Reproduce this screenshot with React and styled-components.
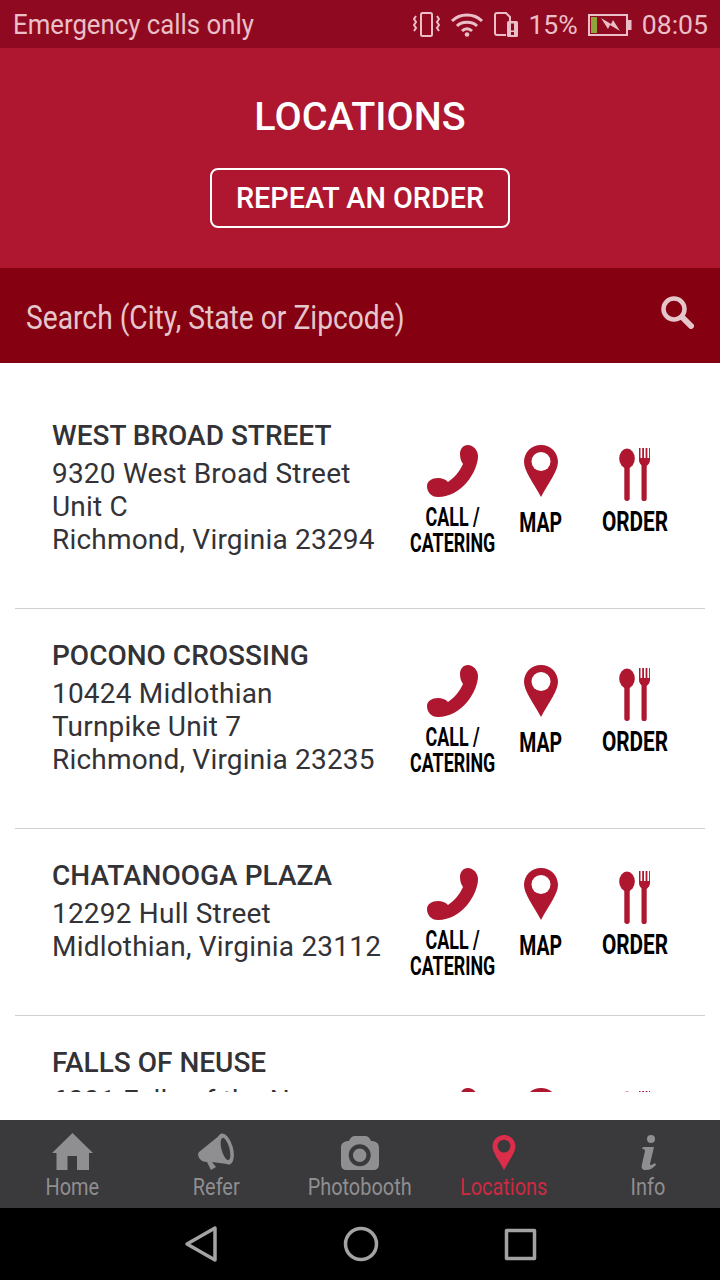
import React from 'react';
import styled, { createGlobalStyle } from 'styled-components';

const GlobalStyle = createGlobalStyle`
    html, body { margin: 0; padding: 0; background: #fff; }
    body { font-family: Roboto, "Liberation Sans", sans-serif; }
`;

const Screen = styled.div`
    width: 720px;
    height: 1280px;
    display: flex;
    flex-direction: column;
    overflow: hidden;
`;

// android status bar
const StatusBar = styled.div`
    height: 48px;
    flex: none;
    box-sizing: border-box;
    display: flex;
    align-items: center;
    padding: 1px 12px 0 13px;
    background: #8f0a21;
    color: #eabfc7;
    font-size: 28px;
`;

const Squeezed = styled.span`
    display: inline-block;
    white-space: nowrap;
    transform-origin: left center;
    transform: scaleX(${p => p.$x});
`;

const Spacer = styled.div`
    flex-grow: 1;
`;

const StatusIcons = styled.div`
    display: flex;
    align-items: center;
    gap: 10px;
    font-size: 26.600px;
`;

const Header = styled.div`
    height: 220px;
    flex: none;
    box-sizing: border-box;
    padding-top: 47px;
    display: flex;
    flex-direction: column;
    align-items: center;
    background: #ae172f;
    color: #fff;
`;

const Title = styled.div`
    font-size: 39.500px;
    font-weight: 500;
    line-height: 44px;
`;

const RepeatButton = styled.div`
    margin-top: 29px;
    width: 300px;
    height: 60px;
    box-sizing: border-box;
    border: 2px solid #fff;
    border-radius: 8px;
    display: flex;
    align-items: center;
    justify-content: center;
    font-size: 28.800px;
    font-weight: 500;
`;

const SearchBar = styled.div`
    height: 95px;
    flex: none;
    box-sizing: border-box;
    padding: 0 26px;
    display: flex;
    align-items: center;
    background: #850011;
    color: #e4c6cb;
    font-size: 33px;
`;

const SearchText = styled(Squeezed)`
    padding-top: 4px;
`;

const SearchIcon = styled.svg`
    margin-bottom: 8px;
`;

const Content = styled.div`
    height: 757px;
    flex: none;
    box-sizing: border-box;
    padding-bottom: 28px;
    background: #fff;
`;

const List = styled.div`
    height: 100%;
    overflow: hidden;
    padding: 26px 15px 0;
    box-sizing: border-box;
`;

const Row = styled.div`
    display: flex;
    align-items: center;
    justify-content: space-between;
    box-sizing: border-box;
    min-height: ${p => p.$minHeight || 0}px;
    border-bottom: 1px solid ${p => (p.$last ? 'transparent' : '#cfcfcf')};
`;

const Info = styled.div`
    align-self: flex-start;
    padding: 32px 0 52px 37px;
    color: #333236;
`;

const Name = styled.div`
    font-size: 28px;
    font-weight: 500;
    line-height: 32px;
    margin-top: -1px;
    margin-bottom: 5px;
`;

const Address = styled.div`
    font-size: 28px;
    line-height: 33px;
    letter-spacing: 0.200px;
    white-space: nowrap;
`;

const Actions = styled.div`
    flex: none;
    margin: 4px 22px 0 0;
    display: grid;
    grid-template-columns: 85px 92px 96px;
    align-items: start;
`;

const Action = styled.div`
    display: flex;
    flex-direction: column;
    align-items: center;
    padding-top: ${p => p.$top || 0}px;
`;

const ActionLabel = styled.div`
    font-size: ${p => p.$size}px;
    font-weight: 700;
    line-height: 26px;
    color: #000;
    text-align: center;
    white-space: nowrap;
    transform: scaleX(${p => p.$x});
    margin-top: ${p => p.$top}px;
`;

const TabBar = styled.div`
    height: 88px;
    flex: none;
    display: grid;
    grid-template-columns: repeat(5, 144px);
    background: #3a393b;
`;

const Tab = styled.div`
    display: flex;
    flex-direction: column;
    align-items: center;
    padding-top: 8px;
    color: ${p => (p.$active ? '#cd2a43' : '#8f8e90')};
`;

const TabIcon = styled.div`
    height: 42px;
    display: flex;
    align-items: flex-end;
    justify-content: center;
`;

const TabLabel = styled.div`
    margin-top: 3px;
    font-size: 24px;
    line-height: 28px;
    transform: scaleX(0.83);
    white-space: nowrap;
`;

const NavBar = styled.div`
    flex: 1;
    background: #000;
    display: flex;
    align-items: center;
    justify-content: center;
    gap: 125px;
`;

const PhoneIcon = () => (
    <svg width="53" height="52" viewBox="0 0 53 52">
        <path fill="#ae172f" d="M42 0C47 0 52 5 52 11C52 26 36 52 12 52C5 52 1 47 1 41C1 36 6 33 12 33C16 33 19 34 22 37C28 33 34 26 37 19C35 16 34 13 34 9C34 4 37 0 42 0z" />
    </svg>
);

const PinIcon = ({ width = 34, height = 52, color = '#ae172f', hole = '#fff' }) => (
    <svg width={width} height={height} viewBox="0 0 34 52">
        <path fill={color} d="M17 0C7.600 0 0 7.400 0 16.800 0 26 9 37 17 52c8-15 17-26 17-35.200C34 7.400 26.400 0 17 0z" />
        <circle cx="17" cy="16.500" r="9.500" fill={hole} />
    </svg>
);

const CutleryIcon = () => (
    <svg width="32" height="53" viewBox="0 0 32 53">
        <g fill="#ae172f">
            <ellipse cx="8" cy="10.500" rx="7.800" ry="10" />
            <rect x="5.300" y="16" width="5.400" height="37" rx="2.700" />
            <rect x="22.500" y="14" width="5.200" height="39" rx="2.600" />
            <path d="M20 0h1.500v10h1.700V0h1.800v10h1.600V0h1.800v10h1.700V0H31v12c0 3-2 5-3.500 6h-3.800C21.800 17 20 15 20 12z" />
        </g>
    </svg>
);

const locations = [
    { name: 'WEST BROAD STREET', lines: ['9320 West Broad Street', 'Unit C', 'Richmond, Virginia 23294'] },
    { name: 'POCONO CROSSING', lines: ['10424 Midlothian', 'Turnpike Unit 7', 'Richmond, Virginia 23235'] },
    { name: 'CHATANOOGA PLAZA', lines: ['12292 Hull Street', 'Midlothian, Virginia 23112'] },
    { name: 'FALLS OF NEUSE', lines: ['6001 Falls of the Neuse'], minHeight: 253, last: true },
];

const Location = ({ item }) => (
    <Row $minHeight={item.minHeight} $last={item.last}>
        <Info>
            <Name>{item.name}</Name>
            {item.lines.map(line => <Address key={line}>{line}</Address>)}
        </Info>
        <Actions>
            <Action>
                <PhoneIcon />
                <ActionLabel $top={8} $size={25} $x={0.715}>CALL /<br />CATERING</ActionLabel>
            </Action>
            <Action>
                <PinIcon />
                <ActionLabel $top={13} $size={27} $x={0.72}>MAP</ActionLabel>
            </Action>
            <Action $top={3}>
                <CutleryIcon />
                <ActionLabel $top={8} $size={27} $x={0.77}>ORDER</ActionLabel>
            </Action>
        </Actions>
    </Row>
);

const App = () => (
    <Screen>
        <GlobalStyle />
        <StatusBar>
            <Squeezed $x={0.92}>Emergency calls only</Squeezed>
            <Spacer />
            <StatusIcons>
                <svg width="27" height="25" viewBox="0 0 27 25" fill="none" stroke="#eabfc7" strokeWidth="2">
                    <rect x="8" y="1" width="11" height="23" rx="1.500" />
                    <path d="M3 4L1 7l2 3-2 3 2 3-2 3M24 4l2 3-2 3 2 3-2 3 2 3" />
                </svg>
                <svg width="34" height="25" viewBox="0 0 34 25" fill="none" stroke="#eabfc7" strokeWidth="3">
                    <path d="M2 9c8-8 22-8 30 0M7 14c5-5 15-5 20 0M12 19c3-3 7-3 10 0" />
                    <circle cx="17" cy="22.500" r="2.300" fill="#eabfc7" stroke="none" />
                </svg>
                <svg width="24" height="25" viewBox="0 0 24 25">
                    <path fill="none" stroke="#eabfc7" strokeWidth="2" d="M12 23H3a2 2 0 0 1-2-2V3a2 2 0 0 1 2-2h9l4 4v4" />
                    <rect x="13" y="9" width="11" height="16" rx="1.500" fill="#eabfc7" />
                    <rect x="17" y="11.500" width="3" height="7" fill="#8f0a21" />
                    <rect x="17" y="20" width="3" height="3" fill="#8f0a21" />
                </svg>
                <span>15%</span>
                <svg width="44" height="22" viewBox="0 0 44 22">
                    <rect x="1" y="1" width="38" height="20" fill="none" stroke="#eabfc7" strokeWidth="2" />
                    <rect x="40" y="6" width="3.500" height="10" fill="#eabfc7" />
                    <rect x="3" y="3" width="6" height="16" fill="#8fa43a" />
                    <path fill="#eabfc7" d="M13 4l10 6 2-4 7 11-10-6-2 4z" />
                </svg>
                <span>08:05</span>
            </StatusIcons>
        </StatusBar>

        <Header>
            <Title>LOCATIONS</Title>
            <RepeatButton>REPEAT AN ORDER</RepeatButton>
        </Header>

        <SearchBar>
            <SearchText $x={0.855}>Search (City, State or Zipcode)</SearchText>
            <Spacer />
            <SearchIcon width="34" height="34" viewBox="0 0 34 34" fill="none" stroke="#e4c6cb">
                <circle cx="14" cy="14" r="10.500" strokeWidth="4.500" />
                <path d="M22 22l9 9" strokeWidth="6" strokeLinecap="round" />
            </SearchIcon>
        </SearchBar>

        <Content>
            <List>
                {locations.map(item => <Location key={item.name} item={item} />)}
            </List>
        </Content>

        <TabBar>
            <Tab>
                <TabIcon>
                    <svg width="41" height="37" viewBox="0 0 41 37" fill="currentColor">
                        <path d="M20.500 0L41 20H37V37H25V23H15.500V37H4.500V20H0z" />
                    </svg>
                </TabIcon>
                <TabLabel>Home</TabLabel>
            </Tab>
            <Tab>
                <TabIcon>
                    <svg width="36" height="37" viewBox="0 0 36 37" fill="currentColor">
                        <path d="M22 2L1 19c-1.500 1.500-1 5 1 7 1 2 4 3 7 3l4 8 5-3-4-5 15 2z" />
                        <ellipse cx="27.500" cy="16" rx="7.500" ry="16" transform="rotate(-15 27.500 16)" />
                        <ellipse cx="27.500" cy="16" rx="4" ry="11.500" transform="rotate(-15 27.500 16)" fill="#3a393b" />
                    </svg>
                </TabIcon>
                <TabLabel>Refer</TabLabel>
            </Tab>
            <Tab>
                <TabIcon>
                    <svg width="38" height="34" viewBox="0 0 38 34">
                        <path fill="currentColor" d="M8 5c1-3 3-5 6-5h10c3 0 5 2 6 5 5 0 8 2 8 7v16c0 4-2 6-6 6H6c-4 0-6-2-6-6V12c0-5 3-7 8-7z" />
                        <circle cx="18.700" cy="19.300" r="11" fill="#3a393b" />
                        <circle cx="18.700" cy="19.300" r="6.700" fill="currentColor" />
                    </svg>
                </TabIcon>
                <TabLabel>Photobooth</TabLabel>
            </Tab>
            <Tab $active>
                <TabIcon>
                    <PinIcon width={24} height={35} color="#dc2d4b" hole="#3a393b" />
                </TabIcon>
                <TabLabel>Locations</TabLabel>
            </Tab>
            <Tab>
                <TabIcon>
                    <svg width="17" height="35" viewBox="1 0 17 35" fill="currentColor">
                        <circle cx="12" cy="4" r="4" />
                        <path d="M4 12h11l-4 17c0 2 2 1 5-1l1 2c-3 3-6 5-10 5-4 0-5-2-4-6l3-13c0-2-2-2-3-2z" />
                    </svg>
                </TabIcon>
                <TabLabel>Info</TabLabel>
            </Tab>
        </TabBar>

        <NavBar>
            <svg width="34" height="38" viewBox="0 0 34 38" fill="none" stroke="#a3a3a3" strokeWidth="3.500" strokeLinejoin="round">
                <path d="M31 3v32L3 19z" />
            </svg>
            <svg width="36" height="36" viewBox="0 0 36 36" fill="none" stroke="#a3a3a3" strokeWidth="3.500">
                <circle cx="18" cy="18" r="15.500" />
            </svg>
            <svg width="33" height="33" viewBox="0 0 33 33" fill="none" stroke="#a3a3a3" strokeWidth="3.500" strokeLinejoin="round">
                <rect x="2.500" y="2.500" width="28" height="28" />
            </svg>
        </NavBar>
    </Screen>
);

export default App;
